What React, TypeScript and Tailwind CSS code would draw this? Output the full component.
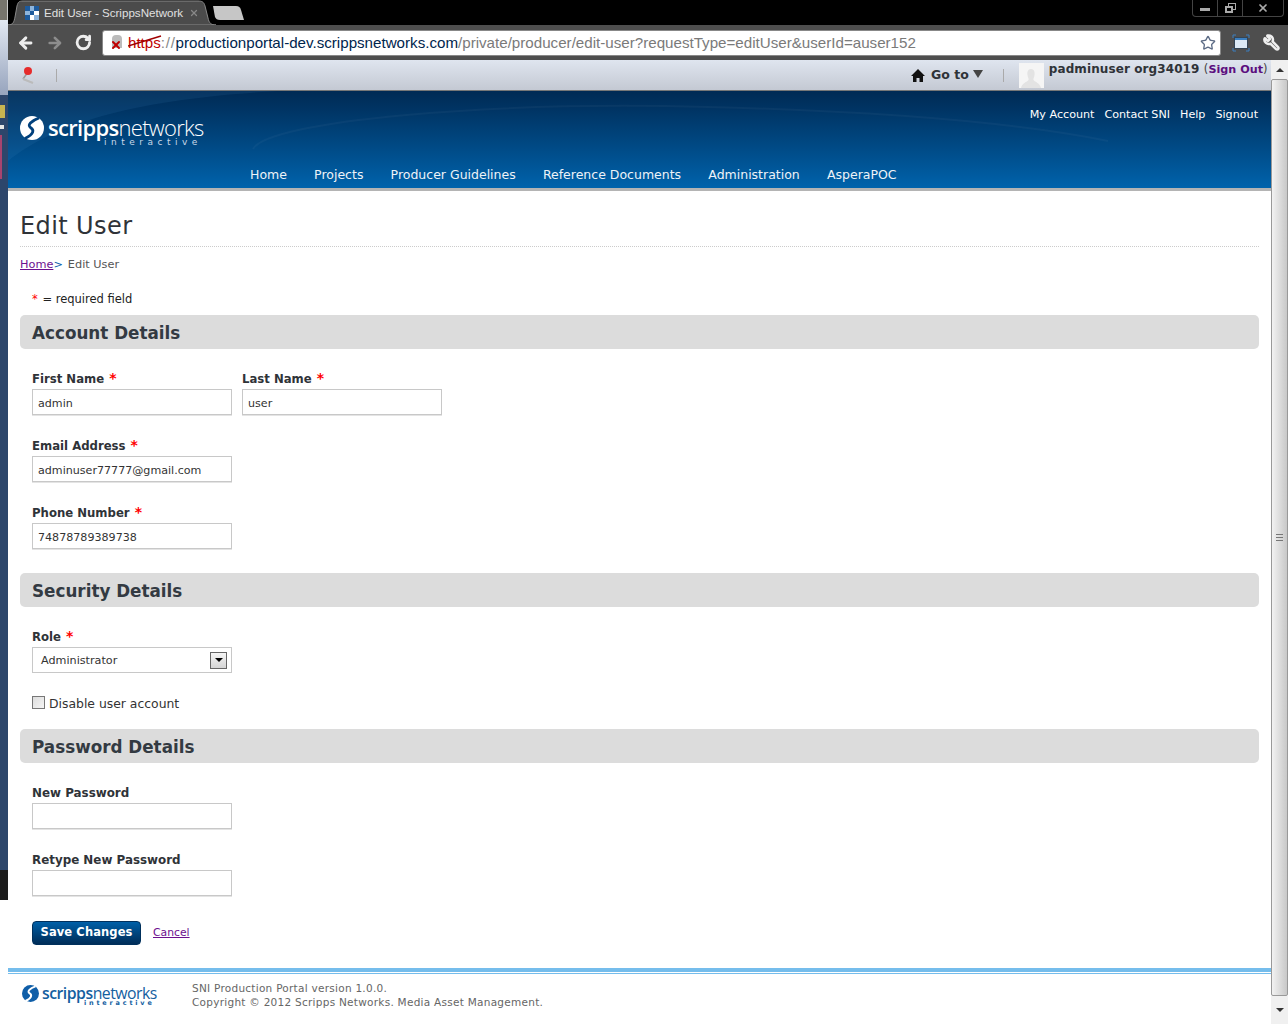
import React from 'react';
import { ArrowLeft, ArrowRight, RotateCw, Star, Wrench, X } from 'lucide-react';

const BODY_FONT = "font-['DejaVu_Sans',Verdana,sans-serif]";

// the red star after a required label
const Req = () => <span className="ml-[1px] text-[14px] leading-none font-bold text-[#f00]">*</span>;

const SwirlLogo = ({ size, fg, bg }: { size: number; fg: string; bg: string }) => (
  <svg width={size} height={size} viewBox="0 0 24 24" className="shrink-0">
    <circle cx="12" cy="12" r="12" fill={fg} />
    <path d="M19 2 C11 5 7 9 10.500 11.500 C14.500 14 14 18 5 22.500" fill="none" stroke={bg} strokeWidth="2.800" />
  </svg>
);

const Field = ({ label, required = true, value = '', className = '' }: { label: string; required?: boolean; value?: string; className?: string }) => (
  <div className={`w-[200px] ${className}`}>
    <div className={`h-[17px] leading-[19px] font-bold text-[#2f3338] whitespace-nowrap ${required ? 'text-[11.7px]' : 'text-[11.9px]'}`}>
      {label} {required && <Req />}
    </div>
    <div className="mt-[2px] h-[26px] w-[200px] border border-[#c8c8c8] bg-white pl-[5px] text-[11.1px] leading-[27px] text-[#333] shadow-[0_1px_0_#e4e4e4]">
      {value}
    </div>
  </div>
);

const SectionBar = ({ title }: { title: string }) => (
  <div className="h-[34px] rounded-[5px] bg-[#dcdcdc] pl-3 text-[16.8px] leading-[37px] font-bold text-[#333a42]">
    {title}
  </div>
);

const WinButtons = () => (
  <div className="flex h-[17px] w-[92px] rounded-b-[4px] border border-t-0 border-[#444] text-[#aaa]">
    <div className="flex w-[25px] items-center justify-center border-r border-[#444]">
      <div className="mt-[3px] h-[3px] w-[10px] bg-[#aaa]" />
    </div>
    <div className="flex w-[25px] items-center justify-center border-r border-[#444]">
      <div className="relative h-[10px] w-[11px]">
        <div className="absolute right-0 top-0 h-[7px] w-[8px] border border-[#aaa]" />
        <div className="absolute bottom-0 left-0 h-[7px] w-[8px] border-2 border-[#aaa] bg-black" />
      </div>
    </div>
    <div className="flex flex-1 items-center justify-center">
      <X size={12} strokeWidth={3.5} />
    </div>
  </div>
);

export default function App() {
  return (
    <div className={`flex h-[1024px] w-[1288px] overflow-hidden bg-white ${BODY_FONT}`}>
      {/* desktop peeking out on the left */}
      <div className="flex h-full w-2 shrink-0 flex-col">
        <div className="h-[20px] border-r border-[#ccc] bg-[#77756d]" />
        <div className="h-[75px] bg-gradient-to-b from-[#e3e9f2] to-[#97a4bd]" />
        <div className="h-[775px] bg-[#2d466b] pt-[10px]">
          <div className="h-[13px] w-[5px] bg-[#c9b450]" />
          <div className="mt-[7px] h-[4px] w-[4px] bg-[#e6e6e6]" />
          <div className="mt-[6px] h-[44px] w-[2px] bg-[#a8446f]" />
        </div>
        <div className="h-[30px] bg-[#1c1c1c]" />
        <div className="flex-1 bg-white" />
      </div>

      <div className="flex min-w-0 flex-1 flex-col">
        {/* tab strip */}
        <div className="relative flex h-[25px] shrink-0 items-start justify-end bg-black">
          <svg className="absolute left-0 top-0" width="240" height="25" viewBox="0 0 240 25">
            <path d="M0 25 C5 25 6 22 7 17 L9 6 C10 2 11 1 15 1 L190 1 C194 1 196 2 197 6 L200 18 C201 23 203 25 208 25 Z" fill="#4b4b4b" stroke="#8a8a8a" />
            <path d="M205 6 L228 6 C231 6 232 7 233 10 L236 20 L212 20 C209 20 208 19 207 17 Z" fill="#c6c6c6" />
          </svg>
          <div className="absolute left-[17px] top-[6px] flex items-center">
            <div className="grid h-[14px] w-[14px] grid-cols-3 bg-white">
              <div className="bg-[#1d5a9c]" /><div className="bg-[#8db4dc]" /><div className="bg-[#1d5a9c]" />
              <div className="bg-[#8db4dc]" /><div className="bg-[#1d5a9c]" /><div className="bg-white" />
              <div className="bg-[#1d5a9c]" /><div className="bg-white" /><div className="bg-[#8db4dc]" />
            </div>
            <span className="ml-[5px] w-[140px] overflow-hidden whitespace-nowrap font-['Liberation_Sans',sans-serif] text-[11.6px] leading-[14px] text-[#e0e0e0]">
              Edit User - ScrippsNetwork
            </span>
            <X size={10} strokeWidth={3} className="ml-[5px] text-[#888]" />
          </div>
          <div className="mr-[4px]">
            <WinButtons />
          </div>
        </div>

        {/* address bar */}
        <div className="flex h-[35px] shrink-0 items-center bg-[#4e4e4e] pl-[9px] pr-[8px]">
          <ArrowLeft size={18} strokeWidth={4} className="text-[#eee]" />
          <ArrowRight size={18} strokeWidth={3.500} className="ml-[11px] text-[#8d8d8d]" />
          <RotateCw size={17} strokeWidth={4} className="ml-[12px] text-[#eee]" />
          <div className="ml-[10px] flex h-[26px] w-[1119px] shrink-0 items-center rounded-[3px] border border-[#888] bg-white pl-[7px] pr-[4px] font-['Liberation_Sans',sans-serif] text-[15.15px]">
            <span className="relative mr-[6px] h-[16px] w-[12px] shrink-0">
              <span className="absolute left-[2px] top-0 h-[13px] w-[10px] rounded-t-[4px] bg-[#bbb]" />
              <X size={12} strokeWidth={4} className="absolute left-0 top-[4px] text-[#c00000]" />
            </span>
            <span className="relative mt-[1px] text-[#c00000]">
              https
              <svg className="absolute left-0 top-[2px]" width="34" height="14" viewBox="0 0 34 14">
                <path d="M0 12 L33 2" stroke="#a00000" strokeWidth="1.5" />
              </svg>
            </span>
            <span className="mt-[1px] tracking-[0.7px] text-[#888]">://</span>
            <span className="mt-[1px] text-[#00254d]">productionportal-dev.scrippsnetworks.com</span>
            <span className="mt-[1px] text-[#7a7a7a]">/private/producer/edit-user?requestType=editUser&amp;userId=auser152</span>
            <Star size={16} strokeWidth={2} className="ml-auto text-[#5c6b85]" />
          </div>
          <svg width="18" height="18" viewBox="0 0 18 18" className="ml-[11px] shrink-0">
            <path d="M1 4 L1 1 L4 1 M14 1 L17 1 L17 4 M1 14 L1 17 L4 17 M14 17 L17 17 L17 14" stroke="#3b7fc0" strokeWidth="1" fill="none" />
            <rect x="2.500" y="3.500" width="13" height="11" fill="#dce9f5" stroke="#345" />
            <rect x="3" y="4" width="12" height="2" fill="#3b7fc0" />
          </svg>
          <Wrench size={17} strokeWidth={3.500} className="ml-[13px] shrink-0 -scale-x-100 text-[#eee]" />
        </div>

        <div className="flex min-h-0 flex-1">
          <div className="flex min-w-0 flex-1 flex-col">
            {/* bookmarks bar */}
            <div className="relative flex h-[31px] shrink-0 items-center whitespace-nowrap border-b border-[#777] bg-gradient-to-b from-[#dfe5ef] to-[#c4c9d3] font-bold text-[#2f3338]">
              <svg width="16" height="20" viewBox="0 0 16 20" className="ml-[12px] shrink-0">
                <path d="M8 7 L3 14" stroke="#999" strokeWidth="1.500" />
                <path d="M3 14 L13 18" stroke="#bbb" strokeWidth="2" />
                <circle cx="8" cy="6" r="4" fill="#e62b2b" />
              </svg>
              <div className="ml-[20px] h-[13px] w-px shrink-0 bg-[#aaa]" />
              <svg width="14" height="13" viewBox="0 0 14 13" className="ml-[854px] shrink-0">
                <path d="M7 0 L14 7 L12 7 L12 13 L8.500 13 L8.500 9 L5.500 9 L5.500 13 L2 13 L2 7 L0 7 Z" fill="#111" />
              </svg>
              <span className="ml-[6px] text-[12.500px]">Go to</span>
              <div className="mb-[2px] ml-[4px] h-0 w-0 shrink-0 border-x-[5px] border-t-[8px] border-x-transparent border-t-[#444]" />
              <div className="ml-[20px] h-[13px] w-px shrink-0 bg-[#aaa]" />
              <div className="ml-[15px] flex h-[25px] w-[25px] shrink-0 items-end justify-center bg-[#f5f5f5]">
                <svg width="22" height="20" viewBox="0 0 22 20">
                  <path d="M11 1 C14 1 15 4 14.500 7 C14 10 13 11 13.500 12 C15 14 20 15 21 20 L1 20 C2 15 7 14 8.500 12 C9 11 8 10 7.500 7 C7 4 8 1 11 1 Z" fill="#e3e3e3" />
                </svg>
              </div>
              <div className="mb-[12px] ml-[5px] text-[12px] tracking-[0.1px]">
                padminuser org34019 <span className="text-[11.500px] font-normal text-[#444]">(</span><span className="text-[11.200px] tracking-normal text-[#5c0f7f]">Sign Out</span><span className="text-[11.500px] font-normal text-[#444]">)</span>
              </div>
            </div>

            {/* site header */}
            <div className="relative h-[97px] shrink-0 overflow-hidden bg-gradient-to-b from-[#002a54] to-[#0063ac]">
              <svg className="absolute inset-0" width="1263" height="97" viewBox="0 0 1263 97">
                <path d="M0 70 C50 30 130 8 270 0 L0 0 Z" fill="#4a9ad8" opacity="0.1" />
                <path d="M245 58 C260 30 480 10 700 16 C860 20 1000 30 1100 50" fill="none" stroke="#ffffff" strokeWidth="2" opacity="0.035" />
              </svg>
              <div className="relative flex h-full flex-col">
                <div className="flex justify-between pl-[12px] pr-[13px]">
                  <div className="flex pt-[25px]">
                    <SwirlLogo size={24} fg="#ffffff" bg="#00407c" />
                    <div className="ml-[4px] pt-[1px] text-white">
                      <div className="font-['Open_Sans',sans-serif] text-[22px] leading-[21px] tracking-[-0.7px]">
                        <span className="font-semibold">scripps</span><span className="font-light">networks</span>
                      </div>
                      <div className="pl-[56px] text-[9px] leading-[8px] tracking-[4.5px] text-[#c9d8e8]">interactive</div>
                    </div>
                  </div>
                  <div className="flex gap-[10px] pt-[15px] text-[11.15px] leading-[17px] text-white">
                    <span>My Account</span><span>Contact SNI</span><span>Help</span><span>Signout</span>
                  </div>
                </div>
                <div className="mt-auto flex gap-[27.2px] pb-[5px] pl-[242px] text-[12.500px] leading-[17px] text-[#eef3f8]">
                  <span>Home</span><span>Projects</span><span>Producer Guidelines</span><span>Reference Documents</span><span>Administration</span><span>AsperaPOC</span>
                </div>
              </div>
            </div>
            <div className="h-[3px] shrink-0 bg-[#b4b4b4]" />

            {/* page content */}
            <div className="flex-1 px-3">
              <h1 className="h-[56px] border-b border-dotted border-[#ccc] pt-[19px] text-[24px] leading-[33px] font-normal tracking-[0.4px] text-[#2f3338]">Edit User</h1>
              <div className="mt-[10px] h-[15px] text-[11.3px] leading-[15px] text-[#555]">
                <a className="text-[#6d0f8f] underline">Home</a><span className="text-[#0a62ad]">&gt;</span><span className="ml-[5px]">Edit User</span>
              </div>
              <div className="mt-[20px] h-[15px] pl-3 text-[11.500px] leading-[15px] text-[#222]">
                <span className="text-[#f00]">*</span> <span className="ml-[1px]">= required field</span>
              </div>
              <div className="mt-[8px]"><SectionBar title="Account Details" /></div>
              <div className="px-3">
                <div className="mt-[21px] flex gap-[10px]">
                  <Field label="First Name" value="admin" />
                  <Field label="Last Name" value="user" />
                </div>
                <Field label="Email Address" value="adminuser77777@gmail.com" className="mt-[22px]" />
                <Field label="Phone Number" value="74878789389738" className="mt-[22px]" />
              </div>
              <div className="mt-[24px]"><SectionBar title="Security Details" /></div>
              <div className="px-3">
                <div className="mt-[21px] w-[200px]">
                  <div className="h-[17px] text-[11.7px] leading-[19px] font-bold text-[#2f3338]">Role <Req /></div>
                  <div className="mt-[2px] flex h-[26px] items-center justify-between border border-[#c8c8c8] pl-2 pr-[4px] text-[11.2px] text-[#333]">
                    <span className="mt-[2px]">Administrator</span>
                    <div className="flex h-[17px] w-[17px] items-center justify-center border border-[#666] bg-gradient-to-b from-[#f5f5f5] to-[#d5d5d5]">
                      <div className="h-0 w-0 border-x-[4px] border-t-[4px] border-x-transparent border-t-black" />
                    </div>
                  </div>
                </div>
                <div className="mt-[22px] flex h-[17px] items-center text-[12.400px] text-[#333]">
                  <div className="mb-[3px] h-[13px] w-[13px] border border-[#777] bg-gradient-to-br from-[#ddd] to-[#f5f5f5]" />
                  <span className="ml-[4px] leading-[17px]">Disable user account</span>
                </div>
              </div>
              <div className="mt-[17px]"><SectionBar title="Password Details" /></div>
              <div className="px-3">
                <Field label="New Password" required={false} className="mt-[21px]" />
                <Field label="Retype New Password" required={false} className="mt-[22px]" />
                <div className="mt-[25px] flex items-center">
                  <button className="h-[24px] w-[109px] rounded-[4px] border border-[#00305c] bg-gradient-to-b from-[#0060a8] to-[#002d58] text-[11.500px] font-bold tracking-[0.1px] text-white">Save Changes</button>
                  <a className="ml-[12px] text-[10.8px] text-[#6d0f8f] underline">Cancel</a>
                </div>
              </div>
            </div>

            {/* footer */}
            <div className="mt-[14px] h-[56px] shrink-0">
              <div className="h-[4px] bg-[#75bdec]" />
              <div className="h-px bg-white" />
              <div className="h-px bg-[#75bdec]" />
              <div className="flex pl-[14px] pt-[7px]">
                <div className="flex w-[170px] pt-[4px]">
                  <SwirlLogo size={17} fg="#0f5ea8" bg="#ffffff" />
                  <div className="ml-[3px] pt-[1px] text-[#14609f]">
                    <div className="font-['Open_Sans',sans-serif] text-[15.8px] leading-[14px] tracking-[-0.5px]">
                      <span className="font-semibold">scripps</span><span>networks</span>
                    </div>
                    <div className="pl-[42px] text-[6.500px] leading-[7px] font-bold tracking-[2.8px]">interactive</div>
                  </div>
                </div>
                <div className="text-[10.500px] leading-[14px] tracking-[0.265px] text-[#666]">
                  <div>SNI Production Portal version 1.0.0.</div>
                  <div>Copyright © 2012 Scripps Networks. Media Asset Management.</div>
                </div>
              </div>
            </div>
          </div>

          {/* scrollbar */}
          <div className="flex w-[17px] shrink-0 flex-col bg-[#f0f0f0]">
            <div className="flex h-[19px] items-center justify-center">
              <div className="h-0 w-0 border-x-[4px] border-b-[4px] border-x-transparent border-b-[#333]" />
            </div>
            <div className="flex h-[917px] items-center justify-center rounded-[2px] border border-[#999] bg-gradient-to-r from-[#f2f2f2] to-[#c8c8c8]">
              <div className="h-[7px] w-[7px] border-y border-[#777] bg-[linear-gradient(#777,#777)] bg-[length:100%_1px] bg-center bg-no-repeat" />
            </div>
            <div className="flex flex-1 items-center justify-center">
              <div className="h-0 w-0 border-x-[4px] border-t-[4px] border-x-transparent border-t-[#333]" />
            </div>
          </div>
        </div>
      </div>
    </div>
  );
}
